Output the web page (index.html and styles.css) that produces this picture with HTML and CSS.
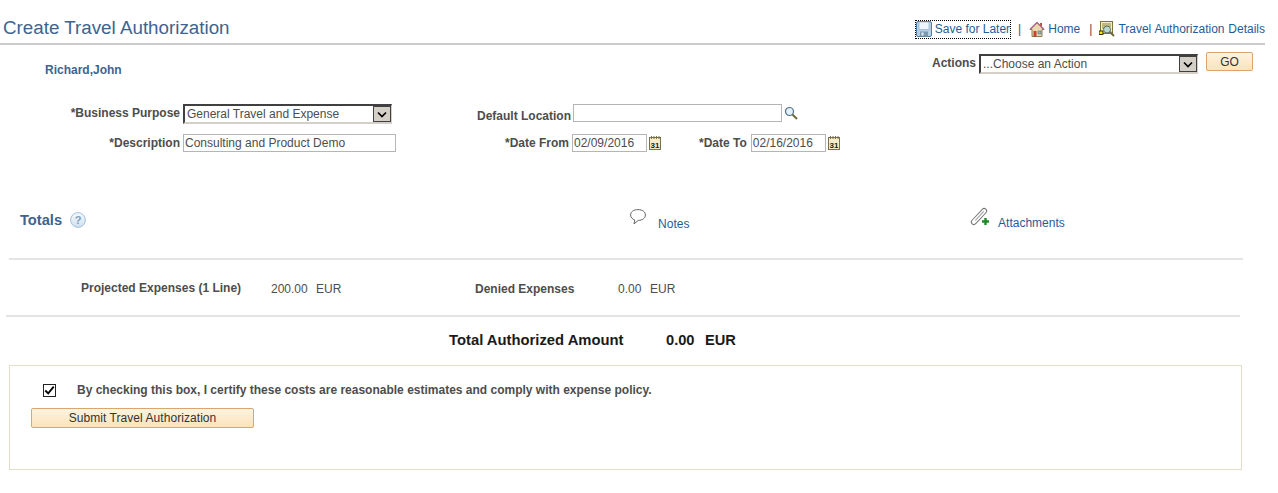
FILE: index.html
```html
<!DOCTYPE html>
<html lang="en">
<head>
<meta charset="utf-8">
<title>Create Travel Authorization</title>
<link rel="stylesheet" href="styles.css">
</head>
<body>
<header class="page-head">
  <h1 class="title">Create Travel Authorization</h1>
  <nav class="top-links">
    <a class="top-link focused" href="#">
      <svg class="ico16" viewBox="0 0 16 16"><rect x="0.5" y="0.5" width="15" height="15" rx="1.5" fill="#b5cfe4" stroke="#4f7fa8"/><rect x="3" y="1" width="10" height="7.5" fill="#eef4f9" stroke="#86a8c4" stroke-width=".6"/><rect x="4" y="10.5" width="8" height="5" fill="#7d98ae"/><rect x="5.5" y="11.5" width="2" height="3" fill="#e6eef5"/></svg>
      <span>Save for Later</span>
    </a>
    <span class="sep">|</span>
    <a class="top-link" href="#">
      <svg class="ico16" viewBox="0 0 16 16"><path d="M8 1.5 L1 8.5 H3 V15.5 H13 V8.5 H15 Z" fill="#ead9ad" stroke="#8a7a52"/><rect x="11" y="2" width="2" height="3.5" fill="#b9553a"/><rect x="4.5" y="10" width="3" height="5.5" fill="#c8402f"/><rect x="9" y="10" width="3" height="3" fill="#8fb3cf" stroke="#55606a" stroke-width=".5"/><path d="M8 1.5 L1 8.5M8 1.5 L15 8.5" stroke="#a8698f" stroke-width="1.4"/></svg>
      <span>Home</span>
    </a>
    <span class="sep sep-last">|</span>
    <a class="top-link" href="#">
      <svg class="ico16" viewBox="0 0 16 16"><rect x="1.5" y="0.5" width="12" height="12" fill="#f3ecc6" stroke="#7c7434"/><path d="M3 3H12M3 5H12M3 7H6" stroke="#8d8543"/><rect x="0" y="10" width="4" height="3.5" fill="#f4e400" stroke="#000" stroke-width=".8"/><path d="M10 10 L15 15" stroke="#6f6a3a" stroke-width="2"/><circle cx="8" cy="8.5" r="3.5" fill="#b9d9cf" stroke="#58705f"/></svg>
      <span class="details-text">Travel Authorization Details</span>
    </a>
  </nav>
</header>

<div class="person-row">
  <a class="person" href="#">Richard,John</a>
  <div class="actions">
    <label class="label">Actions</label>
    <div class="select-wrap select-actions">
      <select class="select"><option>...Choose an Action</option></select>
      <span class="arrow"><svg viewBox="0 0 10 7" width="10" height="7"><path d="M1 1.5 L5 5.5 L9 1.5" fill="none" stroke="#000" stroke-width="1.7"/></svg></span>
    </div>
    <button class="btn btn-go" type="button">GO</button>
  </div>
</div>

<section class="form">
  <div class="form-row row-a">
    <label class="label col-label">*Business Purpose</label>
    <div class="select-wrap select-purpose">
      <select class="select"><option>General Travel and Expense</option></select>
      <span class="arrow"><svg viewBox="0 0 10 7" width="10" height="7"><path d="M1 1.5 L5 5.5 L9 1.5" fill="none" stroke="#000" stroke-width="1.7"/></svg></span>
    </div>
    <label class="label loc-label">Default Location</label>
    <input class="input input-loc" type="text" value="">
    <svg class="ico-search" viewBox="0 0 14 14"><circle cx="5.5" cy="5.5" r="4" fill="#e4f0f8" stroke="#4d6f86" stroke-width="1.2"/><path d="M8.5 8.5 L13 13" stroke="#6d6a3a" stroke-width="2"/></svg>
  </div>
  <div class="form-row row-b">
    <label class="label col-label">*Description</label>
    <input class="input input-desc" type="text" value="Consulting and Product Demo">
    <label class="label from-label">*Date From</label>
    <input class="input input-date" type="text" value="02/09/2016">
    <svg class="ico-cal" viewBox="0 0 12 14"><rect x="0.5" y="1.5" width="11" height="12" fill="#f5ebc8" stroke="#77704a"/><path d="M2.5 0V3M5 0V3M7.5 0V3M10 0V3" stroke="#77704a"/><text x="6" y="11.5" class="cal-text">31</text></svg>
    <label class="label to-label">*Date To</label>
    <input class="input input-date" type="text" value="02/16/2016">
    <svg class="ico-cal" viewBox="0 0 12 14"><rect x="0.5" y="1.5" width="11" height="12" fill="#f5ebc8" stroke="#77704a"/><path d="M2.5 0V3M5 0V3M7.5 0V3M10 0V3" stroke="#77704a"/><text x="6" y="11.5" class="cal-text">31</text></svg>
  </div>
</section>

<section class="totals-head">
  <h2 class="totals-title">Totals</h2>
  <svg class="ico-help" viewBox="0 0 16 16"><defs><linearGradient id="helpfill" x1="0" y1="0" x2="0" y2="1"><stop offset="0" stop-color="#f4f8fc"/><stop offset="1" stop-color="#cfe0f0"/></linearGradient></defs><circle cx="8" cy="8" r="7.4" fill="url(#helpfill)" stroke="#a3c0db"/><text x="8" y="12" class="help-text">?</text></svg>
  <div class="tool tool-notes">
    <svg class="ico-note" viewBox="0 0 16 16"><path d="M8 0.6 C3.6 0.6 0.6 2.8 0.6 6 C0.6 8.4 2.4 10.2 4.8 11 L4 15 L8.2 11.4 C12.4 11.3 15.4 9.2 15.4 6 C15.4 2.8 12.4 0.6 8 0.6 Z" fill="#fff" stroke="#666" stroke-width="1"/></svg>
    <a class="link" href="#">Notes</a>
  </div>
  <div class="tool tool-attach">
    <svg class="ico-clip" viewBox="0 0 18 18"><g transform="rotate(43 8 7.5)"><rect x="5.5" y="-2.5" width="5" height="20" rx="2.5" fill="#fff" stroke="#777"/><path d="M8 0.5 V13" stroke="#999"/></g><path d="M14.5 9V16M11 12.5H18" stroke="#1f8a2a" stroke-width="2.4"/></svg>
    <a class="link" href="#">Attachments</a>
  </div>
</section>

<hr class="rule rule-one">

<section class="expenses">
  <span class="label exp-a">Projected Expenses (1 Line)</span>
  <span class="value exp-b">200.00</span>
  <span class="value exp-c">EUR</span>
  <span class="label exp-d">Denied Expenses</span>
  <span class="value exp-e">0.00</span>
  <span class="value exp-f">EUR</span>
</section>

<hr class="rule rule-two">

<section class="grand">
  <span class="grand-label">Total Authorized Amount</span>
  <span class="grand-amt">0.00</span>
  <span class="grand-cur">EUR</span>
</section>

<section class="submit-box">
  <div class="certify">
    <span class="check"><svg viewBox="0 0 13 13" width="11" height="11"><path d="M1.5 6.5 L5 10 L11.5 2" fill="none" stroke="#000" stroke-width="2.2"/></svg></span>
    <span class="certify-text">By checking this box, I certify these costs are reasonable estimates and comply with expense policy.</span>
  </div>
  <button class="btn btn-submit" type="button">Submit Travel Authorization</button>
</section>
</body>
</html>
```

FILE: styles.css
```css
* { box-sizing: border-box; }
html, body { margin: 0; padding: 0; background: #fff; }
body {
  width: 1278px;
  height: 493px;
  overflow: hidden;
  font-family: "Liberation Sans", Arial, sans-serif;
  font-size: 12px;
  color: #4d4d4d;
}
a { text-decoration: none; }
.page-head {
  width: 1265px;
  height: 45px;
  border-bottom: 2px solid #cccccc;
  display: flex;
  justify-content: space-between;
  align-items: flex-start;
}
.title {
  margin: 17px 0 0 3px;
  font-size: 18.8px;
  line-height: 22px;
  font-weight: normal;
  color: #3d6490;
}
.top-links {
  display: flex;
  align-items: center;
  margin-top: 20px;
  height: 18px;
  color: #4d4d4d;
}
.top-link {
  display: flex;
  align-items: center;
  gap: 3px;
  color: #1f5c99;
  line-height: 14px;
}
.top-link.focused {
  outline: 1px dotted #000;
  outline-offset: 0;
  height: 17px;
}
.details-text { word-spacing: 0.5px; }
.ico16 { width: 16px; height: 16px; flex: none; }
.sep { margin: 0 8px; }
.sep-last { margin: 0 7px 0 9px; }
.person-row {
  display: flex;
  justify-content: space-between;
  height: 58px;
  width: 1253px;
  padding-left: 45px;
  padding-top: 9px;
}
.person {
  margin-top: 9px;
  font-weight: bold;
  color: #3d6490;
  line-height: 14px;
}
.actions { display: flex; align-items: flex-start; }
.label { font-weight: bold; color: #4d4d4d; line-height: 14px; white-space: nowrap; }
.actions .label { margin: 2px 3px 0 0; }
.select-wrap { position: relative; height: 20px; }
.select {
  appearance: none;
  -webkit-appearance: none;
  display: block;
  width: 100%;
  height: 100%;
  margin: 0;
  padding: 0 0 0 2px;
  border-style: solid;
  border-width: 2px 1px 2px 2px;
  border-color: #404040 #d4d0c8 #d4d0c8 #404040;
  border-radius: 0;
  background: #fff;
  font: 12px "Liberation Sans", Arial, sans-serif;
  color: #4d4d4d;
}
.arrow {
  position: absolute;
  right: 1px;
  top: 2px;
  width: 18px;
  height: 16px;
  display: flex;
  align-items: center;
  justify-content: center;
  background: #d4d0c8;
  border: 1px solid #404040;
}
.select-actions { width: 219px; }
.select-purpose { width: 209px; }
.btn {
  font: 12px "Liberation Sans", Arial, sans-serif;
  color: #333;
  background: linear-gradient(#fdf3de, #fbe3bb);
  border: 1px solid #dba56e;
  border-radius: 2px;
  padding: 0;
}
.btn-go { width: 47px; height: 19px; margin: -2px 0 0 8px; }
.form { height: 106px; padding-top: 1px; }
.form-row { display: flex; align-items: center; }
.row-a { height: 20px; }
.row-b { height: 20px; margin-top: 9px; }
.col-label { width: 180px; text-align: right; margin-right: 3px; }
.row-a .col-label { position: relative; top: -1px; }
.input {
  display: block;
  margin: 0;
  height: 18px;
  padding: 0 1px;
  border: 1px solid #b5b5b5;
  border-radius: 0;
  background: #fff;
  font: 12px "Liberation Sans", Arial, sans-serif;
  color: #4d4d4d;
}
.input-desc { width: 213px; }
.input-loc { width: 209px; margin-top: -3px; }
.input-date { width: 75px; }
.loc-label { margin-left: 85px; margin-right: 2px; padding-top: 4px; }
.ico-search { width: 14px; height: 14px; margin-left: 2px; margin-top: -2px; }
.from-label { margin-left: 109px; margin-right: 3px; }
.to-label { margin-left: 38px; margin-right: 4px; }
.ico-cal { width: 12px; height: 14px; margin-left: 2px; }
.cal-text { font: bold 8px "Liberation Sans", Arial, sans-serif; text-anchor: middle; fill: #222; }
.totals-head {
  display: flex;
  align-items: flex-start;
  height: 49px;
  padding-left: 20px;
}
.totals-title {
  margin: 3px 0 0 0;
  font-size: 14.67px;
  line-height: 16px;
  font-weight: bold;
  color: #3d6490;
}
.ico-help { width: 16px; height: 16px; margin: 3px 0 0 8px; }
.help-text { font: bold 11px "Liberation Sans", Arial, sans-serif; text-anchor: middle; fill: #7f9fc0; }
.tool { display: flex; align-items: flex-start; }
.tool-notes { margin-left: 544px; width: 341px; }
.ico-note { width: 16px; height: 16px; margin-top: 0; }
.ico-clip { width: 18px; height: 18px; margin-top: 0; overflow: visible; }
.link { color: #1f5c99; line-height: 14px; }
.tool-notes .link { margin: 8px 0 0 12px; }
.tool-attach .link { margin: 7px 0 0 9px; }
.rule { margin: 0; border: 0; height: 2px; background: #e4e4e4; }
.rule-one { width: 1234px; margin-left: 9px; }
.expenses {
  display: flex;
  align-items: flex-start;
  height: 55px;
  padding: 21px 0 0 81px;
}
.value { line-height: 14px; color: #4d4d4d; }
.exp-a { width: 190px; }
.exp-b { width: 45px; padding-top: 1px; }
.exp-c { width: 159px; padding-top: 1px; }
.exp-d { width: 143px; padding-top: 1px; }
.exp-e { width: 32px; padding-top: 1px; }
.exp-f { padding-top: 1px; }
.rule-two { width: 1234px; margin-left: 6px; }
.grand {
  display: flex;
  align-items: flex-start;
  height: 48px;
  padding: 15px 0 0 449px;
  font-size: 14.67px;
  line-height: 16px;
  font-weight: bold;
  color: #1a1a1a;
}
.grand-label { width: 217px; font-size: 14.8px; }
.grand-amt { width: 39px; }
.submit-box {
  width: 1233px;
  height: 105px;
  margin-left: 9px;
  border: 1px solid #e3dcc8;
  padding: 17px 0 0 21px;
}
.certify { display: flex; align-items: center; height: 14px; padding-left: 12px; }
.check {
  width: 13px;
  height: 13px;
  border: 1px solid #222;
  background: #fff;
  display: flex;
  align-items: center;
  justify-content: center;
  flex: none;
}
.certify-text { margin-left: 21px; font-weight: bold; line-height: 14px; }
.btn-submit { display: block; width: 223px; height: 20px; margin-top: 11px; letter-spacing: 0.06px; }
```
